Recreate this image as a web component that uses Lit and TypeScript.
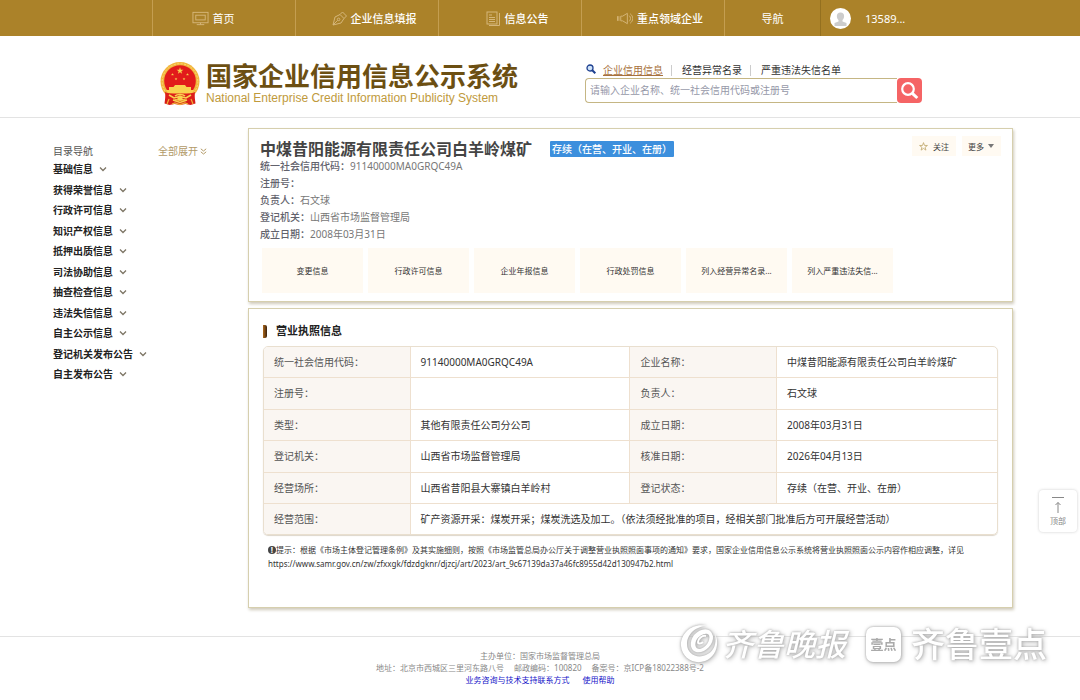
import { LitElement, html, css, svg } from "lit";
import { customElement } from "lit/decorators.js";

const screenIcon = html`<svg width="17" height="15" viewBox="0 0 18 15" fill="none" stroke="currentColor" aria-hidden="true">
  <rect x="1" y="1" width="16" height="11" /><rect x="4" y="4" width="10" height="5" /><path d="M9 12v2M5 14h8" /></svg>`;
const penIcon = html`<svg width="15" height="15" viewBox="0 0 15 15" fill="none" stroke="currentColor" aria-hidden="true">
  <path d="M1 14 3 6l5-2.500 4 4L9 12 1 14zM1 14l4.600-4.600M8 3.500 10.500 1l4 4L12 7.500" /><circle cx="6.600" cy="8.400" r="1.300" /></svg>`;
const docIcon = html`<svg width="15" height="15" viewBox="0 0 15 15" fill="none" stroke="currentColor" aria-hidden="true">
  <rect x="1" y="1" width="10" height="12" /><path d="M13.500 2v12.500H3M3 4h3M3 6.500h6M3 8.500h6M3 10.500h6" /></svg>`;
const hornIcon = html`<svg width="16" height="13" viewBox="0 0 17 13" fill="none" stroke="currentColor" aria-hidden="true">
  <path d="M4 4h2l5-3v11L6 9H4zM2 4v5M.5 4v5M13 3.500a4 4 0 0 1 0 6M14 1.500a6 6 0 0 1 0 10" /></svg>`;

const menu: Array<[string, string, unknown]> = [
  ["home", "首页", screenIcon],
  ["entry", "企业信息填报", penIcon],
  ["entry", "信息公告", docIcon],
  ["entry", "重点领域企业", hornIcon],
];

const sections = [
  "基础信息", "获得荣誉信息", "行政许可信息", "知识产权信息", "抵押出质信息", "司法协助信息",
  "抽查检查信息", "违法失信信息", "自主公示信息", "登记机关发布公告", "自主发布公告",
];

const facts = [
  ["统一社会信用代码：", "91140000MA0GRQC49A"],
  ["注册号：", ""],
  ["负责人：", "石文球"],
  ["登记机关：", "山西省市场监督管理局"],
  ["成立日期：", "2008年03月31日"],
];

const tiles = ["变更信息", "行政许可信息", "企业年报信息", "行政处罚信息", "列入经营异常名录...", "列入严重违法失信..."];

const licence = [
  ["统一社会信用代码：", "91140000MA0GRQC49A", "企业名称：", "中煤昔阳能源有限责任公司白羊岭煤矿"],
  ["注册号：", "", "负责人：", "石文球"],
  ["类型：", "其他有限责任公司分公司", "成立日期：", "2008年03月31日"],
  ["登记机关：", "山西省市场监督管理局", "核准日期：", "2026年04月13日"],
  ["经营场所：", "山西省昔阳县大寨镇白羊岭村", "登记状态：", "存续（在营、开业、在册）"],
];

const starPath = (cx: number, cy: number, r: number) => {
  const points = Array.from({ length: 10 }, (_, i) => {
    const a = (Math.PI / 5) * i - Math.PI / 2;
    const d = i % 2 ? r * 0.4 : r;
    return `${(cx + d * Math.cos(a)).toFixed(2)},${(cy + d * Math.sin(a)).toFixed(2)}`;
  });
  return svg`<polygon points=${points.join(" ")} />`;
};

const emblem = html`<svg width="40" height="44" viewBox="0 0 40 44" role="img" aria-label="国徽">
  <path d="M6 30 4.500 41.500l5 1.500 5-1 5.500 1 5.500-1 5 1 5-1.500L34 30z" fill="#d81e18" />
  <circle cx="20" cy="19.500" r="19.500" fill="#f2b63c" />
  <circle cx="20" cy="19.500" r="17.800" fill="none" stroke="#fbd878" stroke-width="1" stroke-dasharray="2 1.500" />
  <circle cx="20" cy="19" r="15.800" fill="#e21b1b" />
  <g fill="#f9d24f">${starPath(20, 8.8, 3.6)}${starPath(12.5, 12.5, 1.5)}${starPath(27.5, 12.5, 1.5)}${starPath(16, 17, 1.5)}${starPath(24, 17, 1.5)}</g>
  <path d="M15 23h10l1.500 2H31v3H9v-3h4.500zM6 28h28l-2 3.500H8z" fill="#f9d24f" />
  <path d="M5 30c6 3 24 3 30 0l-1 8-5 2-4-3h-10l-4 3-5-2z" fill="#dd1f1a" />
  <path d="M15 34c2-2 8-2 10 0M9 33l5 3 6-1.500 6 1.500 5-3M13 38l7 2.500 7-2.500" fill="none" stroke="#f9d24f" stroke-width="1.600" />
  <circle cx="20" cy="36" r="2.600" fill="#f9d24f" />
  <path d="M9 37l-2 5M31 37l2 5M12 42l3-1 5 1.500 5-1.500 3 1" fill="none" stroke="#f0b23a" stroke-width="1.200" />
</svg>`;

const chevron = html`<svg width="8" height="6" viewBox="0 0 8 6" fill="none" stroke="#7d7565" stroke-width="1.300" aria-hidden="true"><path d="M1 1.500 4 4.500 7 1.500" /></svg>`;

@customElement("app-root")
export class AppRoot extends LitElement {
  static styles = css`
    :host {
      display: block;
      position: relative;
      min-height: 100vh;
      background: #fff;
      color: #333;
      font: 10px/17px "Noto Sans", "Noto Sans CJK SC", sans-serif;
    }
    * { box-sizing: border-box; }
    h1, h2, p, ul, dl, dd { margin: 0; padding: 0; }
    ul { list-style: none; }
    a { color: inherit; text-decoration: none; }
    button { font: inherit; color: inherit; border: 0; padding: 0; background: none; cursor: pointer; }
    svg { flex: none; display: block; }

    .topbar { display: flex; height: 36px; padding-left: 152px; background: #ab8229; color: #fff; font-size: 11px; }
    .topbar a { display: flex; align-items: center; justify-content: center; gap: 4px; flex: 0 1 143px; border-left: 1px solid #c49e50; white-space: nowrap; }
    .topbar svg { color: #d5b67a; }
    .topbar .home { padding-right: 22px; }
    .topbar .entry { padding-left: 14px; font-weight: 500; }
    .topbar .guide { flex-basis: 96px; }
    .topbar .user { justify-content: flex-start; gap: 14px; padding-left: 9px; border-color: #94701f; }
    .topbar .avatar { width: 21px; height: 21px; border-radius: 50%; background: #fff; overflow: hidden; }

    .masthead { display: flex; justify-content: space-between; align-items: flex-start; height: 82px; padding: 26px 158px 0 160px; border-bottom: 1px solid #e3e3e3; }
    .brand { display: flex; gap: 6px; white-space: nowrap; }
    .brand-cn { font-size: 26px; line-height: 28px; font-weight: 700; color: #6c4f12; }
    .brand-en { font-family: "Liberation Sans", Arial, sans-serif; font-size: 12px; line-height: 16px; color: #c09a3c; }
    .search { width: 337px; }
    .tabs { display: flex; align-items: center; height: 16px; color: #333; }
    .tabs .glass { margin: 0 7px 2px 1px; }
    .tabs a + a { margin-left: 8px; padding-left: 10px; border-left: 1px solid #ccc; line-height: 11px; }
    .tabs .current { color: #a8713c; text-decoration: underline; }
    .field { display: flex; height: 25px; }
    .field input { flex: 1; min-width: 0; padding: 0 4px; border: 1px solid #c5b684; border-right: 0; border-radius: 4px 0 0 4px; font: inherit; outline: 0; }
    .field input::placeholder { color: #9698a8; }
    .field button { display: grid; place-items: center; width: 25px; border-radius: 4px; background: #f56465; }

    .page { display: grid; grid-template-columns: 195px minmax(0, 1fr); padding: 10px 67px 28px 53px; }
    .side { padding-top: 14px; }
    .side-head { display: flex; justify-content: space-between; width: 154px; line-height: 18px; color: #555; }
    .side-head button { display: flex; align-items: center; gap: 2px; color: #b29a68; }
    .side-list { display: flex; flex-direction: column; justify-content: space-between; height: 223px; line-height: 18px; font-weight: 700; color: #222; }
    .side-list a { display: flex; align-items: center; gap: 6px; }

    .cards { display: grid; gap: 6px; align-content: start; }
    .card { border: 1px solid #d6cfae; box-shadow: 1px 2px 3px #cfcabb; }
    .summary { padding: 7px 11px 8px; }
    .summary-top { display: flex; justify-content: space-between; align-items: flex-start; }
    .summary-main { padding-top: 4px; }
    .name { display: flex; align-items: center; gap: 18px; line-height: 18px; }
    .name h1 { font-size: 16px; line-height: 18px; color: #444; }
    .badge { padding: 0 2px; border-radius: 1px; background: #3c8fdd; color: #fff; line-height: 16px; font-weight: 500; }
    .facts div { display: flex; }
    .facts dt { color: #62626c; font-weight: 500; }
    .facts dd { color: #777; }
    .actions { display: flex; gap: 6px; font-size: 8px; }
    .actions button { display: flex; align-items: center; gap: 5px; height: 20px; padding: 0 7px; background: #fffaf2; color: #444; }
    .actions .more { padding: 0 7px 0 6px; gap: 4px; }
    .tiles { display: flex; gap: 5px; margin: 5px 0 0 2px; font-size: 8px; }
    .tiles a { display: grid; place-items: center; flex: 0 1 101px; height: 45px; background: #fffaf2; }

    .licence { padding: 14px 14px 36px; }
    .licence h2 { display: flex; align-items: center; gap: 9px; margin-bottom: 7px; font-size: 11px; line-height: 16px; color: #222; }
    .licence h2::before { content: ""; width: 4px; height: 13px; border-radius: 0 2px 2px 0; background: linear-gradient(90deg, #b06a1c, #38200c); }
    table { width: 100%; height: 189px; table-layout: fixed; border: 1px solid #e9dfcf; border-radius: 5px; border-spacing: 0; overflow: hidden; box-shadow: 0 1px 1px #ddd6ca; }
    .key { width: 20%; }
    .val { width: 30%; }
    th, td { padding: 0 10px; text-align: left; font-weight: 400; border-right: 1px solid #eee0cf; border-bottom: 1px solid #eee0cf; }
    th { background: #faf6f2; color: #555; }
    tr:last-child > * { border-bottom: 0; }
    th:last-child, td:last-child { border-right: 0; }
    .note { margin: 8px 5px 0; font-size: 8px; line-height: 14px; }
    .note-mark { display: inline-block; width: 8px; height: 8px; border-radius: 50%; background: #444; color: #fff; line-height: 8px; text-align: center; font-weight: 700; }

    footer { padding: 13px 0 8px; border-top: 1px solid #e3e3e3; text-align: center; font-size: 8px; line-height: 12px; color: #888; }
    footer span + span { margin-left: 10px; }
    footer a { color: #1414c8; }
    footer a + a { margin-left: 13px; }

    .to-top { position: absolute; right: 3px; top: 490px; display: flex; flex-direction: column; align-items: center; gap: 1px; width: 38px; height: 42px; padding-top: 6px; border-radius: 4px; background: #fff; box-shadow: 0 0 3px #ccc; color: #888; font-size: 8px; line-height: 12px; }

    .watermark { position: absolute; right: 33px; bottom: 36px; display: flex; align-items: center; color: #fff; white-space: nowrap; line-height: 40px; filter: drop-shadow(0 0 1px #aaa) drop-shadow(1px 1px 2px #bbb); }
    .paper { margin: 0 20px 0 4px; font-size: 31px; font-style: italic; font-weight: 500; }
    .app { display: grid; place-items: center; width: 35px; height: 35px; margin-right: 10px; border-radius: 7px; background: #fff; color: #aaa; font-size: 13px; line-height: 18px; font-weight: 700; }
    .app-name { font-size: 34px; font-weight: 500; }
  `;

  render() {
    return html`
      <nav class="topbar">
        ${menu.map(([kind, label, icon]) => html`<a class=${kind} href="#">${icon}<span>${label}</span></a>`)}
        <a class="guide" href="#">导航</a>
        <a class="user" href="#">
          <svg class="avatar" viewBox="0 0 21 21" aria-hidden="true"><path d="M10.500 4.500c5 0 4 6 2 7.500v1.500l4 1.500v3h-12v-3l4-1.500V12c-2-1.500-3-7.500 2-7.500z" fill="#ccc" /></svg>
          <span>13589...</span>
        </a>
      </nav>

      <header class="masthead">
        <div class="brand">
          ${emblem}
          <div>
            <div class="brand-cn">国家企业信用信息公示系统</div>
            <div class="brand-en">National Enterprise Credit Information Publicity System</div>
          </div>
        </div>
        <form class="search" @submit=${(e: Event) => e.preventDefault()}>
          <div class="tabs">
            <svg class="glass" width="10" height="10" viewBox="0 0 10 10" fill="#cfe4fa" stroke="#1d3f8f" stroke-width="1.300" aria-hidden="true"><circle cx="4" cy="4" r="3" /><path d="m6.300 6.300 3 3" stroke-width="2" /></svg>
            <a class="current" href="#">企业信用信息</a><a href="#">经营异常名录</a><a href="#">严重违法失信名单</a>
          </div>
          <div class="field">
            <input type="text" aria-label="搜索企业" placeholder="请输入企业名称、统一社会信用代码或注册号" />
            <button aria-label="搜索"><svg width="19" height="19" viewBox="0 0 19 19" fill="none" stroke="#fff" stroke-width="2.200" aria-hidden="true"><circle cx="8" cy="8" r="5.800" /><path d="m12.300 12.300 5 4.700" stroke-width="3" /></svg></button>
          </div>
        </form>
      </header>

      <main class="page">
        <aside class="side">
          <div class="side-head">
            <span>目录导航</span>
            <button>全部展开<svg width="7" height="7" viewBox="0 0 7 7" fill="none" stroke="currentColor" aria-hidden="true"><path d="M.8.8 3.500 3 6.200.8M.8 3.800 3.500 6l2.700-2.200" /></svg></button>
          </div>
          <ul class="side-list">${sections.map((s) => html`<li><a href="#">${s}${chevron}</a></li>`)}</ul>
        </aside>

        <div class="cards">
          <section class="card summary">
            <div class="summary-top">
              <div class="summary-main">
                <div class="name"><h1>中煤昔阳能源有限责任公司白羊岭煤矿</h1><span class="badge">存续（在营、开业、在册）</span></div>
                <dl class="facts">${facts.map(([k, v]) => html`<div><dt>${k}</dt><dd>${v}</dd></div>`)}</dl>
              </div>
              <div class="actions">
                <button><svg width="9" height="9" viewBox="0 0 10 10" fill="none" stroke="#c4ad74" aria-hidden="true">${starPath(5, 5.3, 4.6)}</svg>关注</button>
                <button class="more">更多<svg width="6" height="4" viewBox="0 0 6 4" fill="#777" aria-hidden="true"><path d="M0 0h6L3 4z" /></svg></button>
              </div>
            </div>
            <div class="tiles">${tiles.map((t) => html`<a href="#">${t}</a>`)}</div>
          </section>

          <section class="card licence">
            <h2>营业执照信息</h2>
            <table>
              <colgroup><col class="key" /><col class="val" /><col class="key" /><col class="val" /></colgroup>
              <tbody>
                ${licence.map(([a, b, c, d]) => html`<tr><th scope="row">${a}</th><td>${b}</td><th scope="row">${c}</th><td>${d}</td></tr>`)}
                <tr><th scope="row">经营范围：</th><td colspan="3">矿产资源开采：煤炭开采；煤炭洗选及加工。（依法须经批准的项目，经相关部门批准后方可开展经营活动）</td></tr>
              </tbody>
            </table>
            <p class="note"><span class="note-mark">!</span>提示：根据《市场主体登记管理条例》及其实施细则，按照《市场监管总局办公厅关于调整营业执照照面事项的通知》要求，国家企业信用信息公示系统将营业执照照面公示内容作相应调整，详见<br /><a href="#">https://www.samr.gov.cn/zw/zfxxgk/fdzdgknr/djzcj/art/2023/art_9c67139da37a46fc8955d42d130947b2.html</a></p>
          </section>
        </div>
      </main>

      <footer>
        <p>主办单位：国家市场监督管理总局</p>
        <p><span>地址：北京市西城区三里河东路八号</span><span>邮政编码：100820</span><span>备案号：京ICP备18022388号-2</span></p>
        <p><a href="#">业务咨询与技术支持联系方式</a><a href="#">使用帮助</a></p>
      </footer>

      <button class="to-top">
        <svg width="12" height="18" viewBox="0 0 12 18" fill="none" stroke="currentColor" aria-hidden="true"><path d="M0 1.500h12M6 17V6.500M3.500 9 6 6.500 8.500 9" /></svg>
        顶部
      </button>

      <div class="watermark">
        <svg width="38" height="40" viewBox="0 0 38 40" fill="#fff" aria-hidden="true">
          <path d="M27 2C13-2 0 9 1 22c1 12 13 19 24 15C36 33 40 19 35 10c2 9-1 18-9 21-9 4-19-1-19-11C7 10 16 2 27 2z" />
          <path d="M31 8c-3-5-12-3-17 3-5 7-4 15 2 17 8 2 18-7 17-16-1-2-1-3-2-4zm-2 3c2 6-4 13-9 14-5 0-6-5-3-10 3-4 9-7 12-4z" fill-rule="evenodd" />
          <path d="M26 12c-4-1-8 3-8 6 0 2 3 2 5 0" fill="none" stroke="#fff" stroke-width="2" />
        </svg>
        <span class="paper">齐鲁晚报</span>
        <span class="app">壹点</span>
        <span class="app-name">齐鲁壹点</span>
      </div>
    `;
  }
}
